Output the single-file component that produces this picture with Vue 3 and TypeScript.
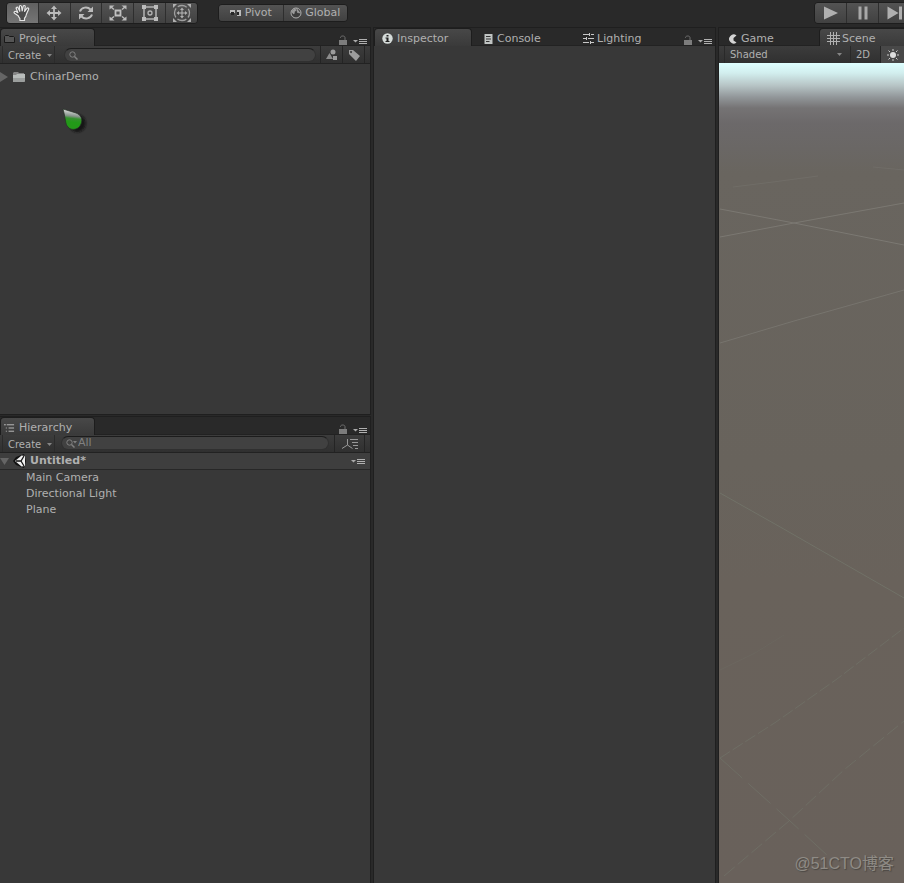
<script setup lang="ts">
import { ref } from 'vue'

interface Tool {
  id: string
  label: string
}

const tools: Tool[] = [
  { id: 'hand', label: 'Hand' },
  { id: 'move', label: 'Move' },
  { id: 'rotate', label: 'Rotate' },
  { id: 'scale', label: 'Scale' },
  { id: 'rect', label: 'Rect' },
  { id: 'transform', label: 'Transform' },
]
const playback: Tool[] = [
  { id: 'play', label: 'Play' },
  { id: 'pause', label: 'Pause' },
  { id: 'step', label: 'Step' },
]
const activeTool = ref<string>('hand')
const objects: string[] = ['Main Camera', 'Directional Light', 'Plane']
const projectQuery = ref('')
const hierarchyQuery = ref('')
const shading = ref('Shaded')
</script>

<template>
  <div class="editor">
    <svg class="sprite" aria-hidden="true">
      <symbol id="hand" viewBox="0 0 18 18">
        <path d="M5.2 11.800 1.500 9.200C.5 8.300 1.600 6.800 2.900 7.600l2 1.200L3.200 4.600c-.4-1.300 1.300-1.900 1.900-.7L6.800 7.300 6.400 2.600c0-1.400 1.900-1.500 2.100-.1L9.200 6.800l1-4.500c.4-1.300 2.200-.9 2 .5l-.6 4.700 2.200-3.100c.8-1 2.300-.1 1.700 1.100l-2 4.500c-.3 2-.8 3.200-2 4.300v2.200H6.900v-2c-1-.8-1.300-1.700-1.700-2.700z" fill="#4b4b4b" stroke="#e4e4e4" stroke-width="1.200" stroke-linejoin="round" />
      </symbol>
      <symbol id="move" viewBox="0 0 18 18">
        <path d="M9 3v12M3 9h12" stroke="#bcbcbc" stroke-width="1.800" />
        <path d="M9 1.500 12 5H6zM9 16.500 6 13h6zM1.500 9 5 6v6zM16.500 9 13 12V6z" fill="#bcbcbc" />
      </symbol>
      <symbol id="rotate" viewBox="0 0 18 18">
        <path d="M3 7.500C4.500 3 10.500 2.300 13.500 5.500M15 10.500C13.500 15 7.500 15.700 4.500 12.500" fill="none" stroke="#bcbcbc" stroke-width="2" />
        <path d="M16 2.500v5.500h-5.500zM2 15.500V10h5.500z" fill="#bcbcbc" />
      </symbol>
      <symbol id="scale" viewBox="0 0 18 18">
        <path d="M6.500 6.500h5v5h-5z" fill="#505050" stroke="#c0c0c0" stroke-width="1.800" />
        <path d="m2 3 3 2.500M16 3l-3 2.500M2 15l3-2.500M16 15l-3-2.500" stroke="#bcbcbc" stroke-width="1.500" />
        <path d="M.5 1.500h5l-5 4zM17.500 1.500h-5l5 4zM.5 16.500h5l-5-4zM17.500 16.500h-5l5-4z" fill="#bcbcbc" />
      </symbol>
      <symbol id="rect" viewBox="0 0 18 18">
        <path d="M3 3h12v12H3z" fill="none" stroke="#b4b4b4" stroke-width="1.500" />
        <path d="M1 1h4v4H1zM13 1h4v4h-4zM1 13h4v4H1zM13 13h4v4h-4z" fill="#bcbcbc" />
        <circle cx="9" cy="9" r="2" fill="none" stroke="#b4b4b4" stroke-width="1.300" />
      </symbol>
      <symbol id="transform" viewBox="0 0 20 20">
        <circle cx="10" cy="10" r="7.500" fill="none" stroke="#a0a0a0" stroke-width="1.300" stroke-dasharray="9.500 2.280" stroke-dashoffset="4.700" />
        <path d="M10 6v8M6 10h8" stroke="#b8b8b8" />
        <path d="m10 4.500 2 2.500H8zM10 15.500 8 13h4zM4.500 10 7 8v4zM15.500 10 13 12V8zM1 1h4L1 5zM19 1h-4l4 4zM1 19h4l-4-4zM19 19h-4l4-4z" fill="#b0b0b0" />
      </symbol>
      <symbol id="play" viewBox="0 0 18 18"><path d="M2 2.500 16 9 2 15.500z" fill="#b0b0b0" /></symbol>
      <symbol id="pause" viewBox="0 0 18 18"><path d="M4.500 2.500h3v13h-3zM10.500 2.500h3v13h-3z" fill="#a8a8a8" /></symbol>
      <symbol id="step" viewBox="0 0 18 18"><path d="m1.500 2.500 11 6.500-11 6.500zM13 2.500h3v13h-3z" fill="#b0b0b0" /></symbol>
      <symbol id="lock" viewBox="0 0 8 10">
        <path d="M1.500 3V2.500c0-2 4.500-2 4.500 0V5" fill="none" stroke="#707070" />
        <path d="M0 5h8v5H0z" fill="#7c7c7c" />
      </symbol>
      <symbol id="menu" viewBox="0 0 14 7">
        <path d="M0 2h5L2.500 4.500z" fill="#aaa" />
        <path d="M6 1.500h8M6 3.500h8M6 5.500h8" stroke="#b0b0b0" />
      </symbol>
      <symbol id="caret" viewBox="0 0 5 3"><path d="M0 0h5L2.500 3z" fill="#858585" /></symbol>
      <symbol id="search" viewBox="0 0 9 9">
        <circle cx="3.500" cy="3.500" r="2.700" fill="none" stroke="#808080" />
        <path d="m5.500 5.500 3 3" stroke="#808080" stroke-width="1.500" />
      </symbol>
    </svg>

    <header class="toolbar">
      <div class="group tools">
        <button
          v-for="tool in tools"
          :key="tool.id"
          type="button"
          :aria-label="tool.label"
          :class="{ on: tool.id === activeTool }"
          @click="activeTool = tool.id"
        >
          <svg :class="{ wide: tool.id === 'transform' }"><use :href="'#' + tool.id" /></svg>
        </button>
      </div>
      <div class="group handles">
        <button type="button">
          <svg class="handle-icon" viewBox="0 0 12 12">
            <path d="M0 3h5v3H0zM7 3h4v6H7z" fill="#bcbcbc" />
            <path d="M1 5h3v3H1zM7 5h2v3H7z" fill="#262626" />
          </svg>
          Pivot
        </button>
        <button type="button">
          <svg class="handle-icon" viewBox="0 0 12 12">
            <circle cx="6" cy="6" r="5" fill="#3c3c3c" stroke="#b0b0b0" />
            <path d="m2 4 3-2.500 1 2-1.500 1L4 7 2.500 6zM6.500 1l1 4.500 3 .5" fill="#999" stroke="#aaa" stroke-width="0.600" />
          </svg>
          Global
        </button>
      </div>
      <div class="group playback">
        <button v-for="item in playback" :key="item.id" type="button" :aria-label="item.label">
          <svg><use :href="'#' + item.id" /></svg>
        </button>
      </div>
    </header>

    <main class="workspace">
      <div class="column left">
        <section class="panel">
          <div class="tabs">
            <button class="tab active short" type="button">
              <svg class="folder" viewBox="0 0 11 8"><path d="M.5 7.500v-6l1-1h3l1 1h4l1 1v5z" fill="#555" stroke="#181818" /></svg>
              Project
            </button>
            <span class="tab-actions">
              <button type="button" aria-label="Lock Project"><svg class="lock"><use href="#lock" /></svg></button>
              <button type="button" aria-label="Project menu"><svg class="menu"><use href="#menu" /></svg></button>
            </span>
          </div>
          <div class="bar">
            <button class="create" type="button">Create <svg class="caret"><use href="#caret" /></svg></button>
            <label class="search">
              <svg><use href="#search" /></svg>
              <input v-model="projectQuery" type="text" aria-label="Search project" />
            </label>
            <button class="filter" type="button" aria-label="Search by type">
              <svg viewBox="0 0 12 12"><path d="m3.500 4 3.500 6H0z" fill="#8c8c8c" /><circle cx="7" cy="3" r="2.500" fill="#9c9c9c" /><path d="M7 7h4v4H7z" fill="#9c9c9c" /></svg>
            </button>
            <button class="filter" type="button" aria-label="Search by label">
              <svg viewBox="0 0 12 12"><path d="M1 1h4l7 6-4 5-7-7zM3 2a1 1 0 1 0 .1 0z" fill="#9c9c9c" fill-rule="evenodd" /></svg>
            </button>
            <span class="bar-end"></span>
          </div>
          <div class="content">
            <div class="folder-row">
              <svg class="fold" viewBox="0 0 8 10"><path d="m0 0 8 5-8 5z" fill="#656565" /></svg>
              <svg class="folder-open" viewBox="0 0 14 12">
                <path d="M1 10V2l1-1h4l1 1h5v8z" fill="#858585" />
                <path d="M1 4h3l1-1h8v7l-1 1H1z" fill="#b8bcba" />
                <path d="M1 7h12v3l-1 1H1z" fill="#9b9e9d" />
              </svg>
              ChinarDemo
            </div>
            <svg class="pointer" viewBox="0 0 26 27">
              <defs>
                <linearGradient id="drop" x1="0.100" y1="0" x2="0" y2="1">
                  <stop offset="0" stop-color="#e4e4e4" />
                  <stop offset="0.300" stop-color="#86938a" />
                  <stop offset="0.420" stop-color="#35912e" />
                  <stop offset="0.600" stop-color="#229a18" />
                  <stop offset="1" stop-color="#249818" />
                </linearGradient>
                <filter id="soft"><feGaussianBlur stdDeviation="1.200" /></filter>
              </defs>
              <path d="M4 4 18 7c5 2 7 7 5 12-2 5-9 7-13 3-3-3-3-8-6-18z" fill="#161616" filter="url(#soft)" />
              <path d="M1 1 14 5c5 2 7 6 5 11-2 6-10 7-13 3C3 16 4 12 1 1z" fill="url(#drop)" stroke="#243024" stroke-width="0.700" />
            </svg>
          </div>
        </section>

        <section class="panel">
          <div class="tabs">
            <button class="tab active short" type="button">
              <svg class="tree" viewBox="0 0 12 10"><path d="M0 1.500h2M3 1.500h8M2 5h1M5 5h6M2 8.500h1M5 8.500h6" stroke="#c4c4c4" /></svg>
              Hierarchy
            </button>
            <span class="tab-actions">
              <button type="button" aria-label="Lock Hierarchy"><svg class="lock"><use href="#lock" /></svg></button>
              <button type="button" aria-label="Hierarchy menu"><svg class="menu"><use href="#menu" /></svg></button>
            </span>
          </div>
          <div class="bar">
            <button class="create" type="button">Create <svg class="caret"><use href="#caret" /></svg></button>
            <label class="search scoped">
              <svg class="scope" viewBox="0 0 12 9">
                <circle cx="3.500" cy="3.500" r="2.700" fill="none" stroke="#808080" />
                <path d="m5.500 5.500 3 3" stroke="#808080" stroke-width="1.500" />
                <path d="M7 2h4L9 4.500z" fill="#808080" />
              </svg>
              <input v-model="hierarchyQuery" type="text" placeholder="All" aria-label="Search hierarchy" />
            </label>
            <button class="filter sort" type="button" aria-label="Sort objects">
              <svg viewBox="0 0 16 12"><path d="M5.500 1v6L0 10.500M5.500 7l5 3.500M8 1.500h8M10 4.500h6M11 7.500h5M13 10.500h3" fill="none" stroke="#989898" /></svg>
            </button>
            <span class="bar-end"></span>
          </div>
          <div class="scene-row">
            <svg class="fold-open" viewBox="0 0 9 7"><path d="M0 0h9L4.500 7z" fill="#656565" /></svg>
            <svg class="unity" viewBox="0 0 14 14">
              <path d="M0 7 3 3l8-3 2 7-2 7-8-3z" fill="#111" />
              <path d="M2 7 8.500 1.500 12 2v10l-3.500.5z" fill="#f0f0f0" />
              <path d="M3 7h5l3-5M8 7l3 5" fill="none" stroke="#151515" stroke-width="1.300" />
            </svg>
            <strong>Untitled*</strong>
            <button class="row-menu" type="button" aria-label="Scene menu"><svg class="menu"><use href="#menu" /></svg></button>
          </div>
          <ul class="objects">
            <li v-for="name in objects" :key="name">{{ name }}</li>
          </ul>
        </section>
      </div>

      <section class="panel">
        <div class="tabs">
          <button class="tab active" type="button">
            <svg class="info" viewBox="0 0 11 11">
              <circle cx="5.500" cy="5.500" r="5.200" fill="#d5dbd9" />
              <path d="M4.500 2h2v1.500h-2zM3.500 4.500h3V8h1v1h-4V8h1V5.500h-1z" fill="#222" />
            </svg>
            Inspector
          </button>
          <button class="tab" type="button">
            <svg class="console" viewBox="0 0 9 10"><path d="M0 0h8v10H0z" fill="#c0c4c3" /><path d="M1.500 2.500H6M1.500 5h5M1.500 7.500H5" stroke="#333" /></svg>
            Console
          </button>
          <button class="tab" type="button">
            <svg class="sliders" viewBox="0 0 11 11"><path d="M0 1.500h6M8 1.500h3M0 5.500h3M5 5.500h6M0 9.500h6M8 9.500h3M6.500 0v3M3.500 4v3M7.500 8v3" fill="none" stroke="#c8c8c8" /></svg>
            Lighting
          </button>
          <span class="tab-actions">
            <button type="button" aria-label="Lock Inspector"><svg class="lock"><use href="#lock" /></svg></button>
            <button type="button" aria-label="Inspector menu"><svg class="menu"><use href="#menu" /></svg></button>
          </span>
        </div>
        <div class="content"></div>
      </section>

      <section class="panel scene">
        <div class="tabs">
          <button class="tab game" type="button">
            <svg class="console" viewBox="0 0 10 10"><path d="M8.500 1.500A4.500 4.500 0 1 0 8.500 8.500L5.500 6.500V4z" fill="#d4d4d4" /></svg>
            Game
          </button>
          <button class="tab active view" type="button">
            <svg class="grid-icon" viewBox="0 0 13 13"><path d="M0 3.500h13M0 6.500h13M0 9.500h13M3.500 0v13M6.500 0v13M9.500 0v13" stroke="#b0b0b0" /></svg>
            Scene
          </button>
        </div>
        <div class="bar">
          <span class="shading">
            <select v-model="shading" aria-label="Draw mode"><option>Shaded</option></select>
            <svg class="caret"><use href="#caret" /></svg>
          </span>
          <button class="two-d" type="button">2D</button>
          <button class="light" type="button" aria-label="Scene lighting">
            <svg viewBox="0 0 12 12"><circle cx="6" cy="6" r="3" fill="#ddd" /><path d="M6 0v2M6 10v2M0 6h2M10 6h2M1.500 1.500 3 3M9 9l1.500 1.500M10.500 1.500 9 3M3 9l-1.500 1.500" stroke="#ccc" /></svg>
          </button>
        </div>
        <div class="viewport">
          <svg class="ground" viewBox="0 0 185 820" preserveAspectRatio="xMinYMin slice">
            <g fill="none" stroke="#7b7872" stroke-width="1">
              <path d="m1 146 74 14 110 22" />
              <path d="M1 174 75 160l110-20" />
              <path d="M1 280 75 258l110-31" opacity="0.800" />
              <path d="m14 124 40-5 45-6M154 104l31 3" opacity="0.400" />
              <path d="m1 430 62 35 122 70" stroke="#777b70" opacity="0.600" />
              <path d="m1 695 56-36 61-43 67-51" stroke="#737a6d" stroke-dasharray="12 3" opacity="0.500" />
              <path d="m5 813 65-55 56-52 59-48" stroke="#737a6d" stroke-dasharray="14 4" opacity="0.500" />
              <path d="m1 695 70 63 38 35" stroke="#737a6d" stroke-dasharray="30 8" opacity="0.500" />
              <path d="m1 607 35-17 29-18" stroke="#737a6d" opacity="0.200" />
            </g>
          </svg>
          <span class="watermark">@51CTO博客</span>
        </div>
      </section>
    </main>
  </div>
</template>

<style>
body {
  margin: 0;
  background: #292929;
}
</style>

<style scoped>
.editor {
  display: flex;
  flex-direction: column;
  min-height: 100vh;
  overflow: hidden;
  background: #292929;
  color: #b0b0b0;
  font: 11px/16px "DejaVu Sans", Verdana, sans-serif;
}
.editor * { box-sizing: border-box; }
.sprite { position: absolute; width: 0; height: 0; }
button {
  display: flex;
  align-items: center;
  margin: 0;
  padding: 0;
  border: 0;
  background: none;
  color: inherit;
  font: inherit;
  white-space: nowrap;
}
svg { flex: none; display: block; }

.toolbar {
  display: flex;
  align-items: center;
  height: 28px;
  padding: 0 0 2px 6px;
}
.group {
  display: flex;
  flex: none;
  height: 22px;
  overflow: hidden;
  border: 1px solid #1d1d1d;
  border-radius: 4px;
}
.group button {
  flex: 1;
  justify-content: center;
  background: linear-gradient(#535353, #414141);
}
.group button + button { border-left: 1px solid #2e2e2e; }
.group button.on { background: linear-gradient(#606060, #757575); }
.group svg { width: 18px; height: 18px; }
.group svg.wide { width: 20px; height: 20px; }
.tools { width: 192px; }
.handles { width: 130px; height: 18px; margin-left: 20px; }
.handles button { gap: 3px; }
.group .handle-icon { width: 12px; height: 12px; }
.playback { width: 97px; margin-left: auto; margin-right: -7px; }

.workspace {
  flex: 1;
  display: grid;
  grid-template-columns: minmax(0, 370fr) minmax(0, 341fr) minmax(0, 185fr);
  column-gap: 4px;
}
.left {
  display: grid;
  grid-template-rows: 386fr 466fr;
  row-gap: 3px;
}
.panel {
  display: flex;
  flex-direction: column;
  min-width: 0;
  background: #383838;
  box-shadow: 0 0 0 1px #1f1f1f;
}
.tabs {
  display: flex;
  height: 18px;
  background: #292929;
  border-bottom: 1px solid #222;
}
.tab {
  flex: none;
  width: 95px;
  height: 18px;
  margin-left: 4px;
  padding: 3px 0 0 8px;
  gap: 3px;
}
.tab.active {
  width: 98px;
  margin-left: 0;
  padding: 2px 0 0 7px;
  gap: 4px;
  border: 1px solid #1d1d1d;
  border-bottom: 0;
  border-radius: 4px 4px 0 0;
  background: linear-gradient(#484848, #3a3a3a);
}
.tab.active.short { width: 95px; padding-left: 3px; }
.tab.active.view { gap: 2px; }
.tab.game { width: 100px; margin-left: 0; padding-left: 9px; }
.tab-actions {
  display: flex;
  align-items: flex-end;
  gap: 6px;
  margin-left: auto;
  padding-right: 3px;
}
.lock { width: 8px; height: 10px; }
.menu { width: 14px; height: 7px; }
.folder { width: 11px; height: 8px; }
.tree { width: 11px; height: 10px; }
.info, .sliders { width: 11px; height: 11px; }
.console { width: 10px; height: 10px; }
.grid-icon { width: 13px; height: 13px; }

.bar {
  display: flex;
  align-items: stretch;
  height: 18px;
  border-bottom: 1px solid #222;
  background: linear-gradient(#3c3c3c, #303030);
  font-size: 10px;
}
.create {
  width: 53px;
  margin-left: 2px;
  padding: 2px 0 0 5px;
  gap: 6px;
  border: 1px solid #2b2b2b;
  border-width: 0 1px;
}
.caret { width: 5px; height: 3px; }
.search {
  flex: 1;
  display: flex;
  align-items: center;
  min-width: 0;
  height: 14px;
  margin: 2px 4px 0 9px;
  padding-left: 4px;
  gap: 3px;
  border: 1px solid #303030;
  border-top-color: #1c1c1c;
  border-radius: 7px;
  background: #414141;
}
.search.scoped { margin: 1px 5px 0 6px; gap: 0; }
.search svg { width: 9px; height: 9px; }
.search .scope { width: 12px; }
.search input {
  flex: 1;
  min-width: 0;
  height: 12px;
  padding: 0;
  border: 0;
  outline: 0;
  background: none;
  color: #b0b0b0;
  font: 11px/12px "DejaVu Sans", Verdana, sans-serif;
}
.search input::placeholder { color: #808080; opacity: 1; }
.filter {
  width: 22px;
  justify-content: center;
  border-left: 1px solid #242424;
}
.filter svg { width: 12px; height: 12px; }
.filter.sort { width: 30px; }
.filter.sort svg { width: 16px; }
.bar-end { width: 6px; border-left: 1px solid #242424; }

.content { flex: 1; position: relative; }
.folder-row {
  display: flex;
  align-items: center;
  padding-top: 5px;
}
.fold { width: 8px; height: 10px; margin-right: 4px; }
.folder-open { width: 14px; height: 12px; margin-right: 4px; }
.pointer {
  position: absolute;
  top: 44px;
  left: 62px;
  width: 26px;
  height: 27px;
}
.scene-row {
  display: flex;
  align-items: center;
  height: 17px;
  border-bottom: 1px solid #272727;
  background: #3e3e3e;
}
.fold-open { width: 9px; height: 7px; margin-right: 4px; }
.unity { width: 14px; height: 14px; margin-right: 3px; }
.row-menu { margin-left: auto; margin-right: 5px; }
.objects {
  margin: 0;
  padding: 0 0 0 26px;
  list-style: none;
}

.shading {
  flex: 1;
  position: relative;
  display: flex;
  align-items: center;
  margin-left: 5px;
  padding-right: 8px;
  border: 1px solid #292929;
  border-width: 0 1px;
}
.shading select {
  flex: 1;
  min-width: 0;
  height: 16px;
  padding: 0 0 0 5px;
  border: 0;
  appearance: none;
  background: none;
  color: #b0b0b0;
  font: 10px/16px "DejaVu Sans", Verdana, sans-serif;
}
.two-d { width: 30px; justify-content: center; border-right: 1px solid #252525; padding-right: 5px; }
.light { width: 23px; justify-content: center; background: #484848; }
.light svg { width: 12px; height: 12px; }
.scene .bar { height: 17px; border-bottom: 0; }
.viewport {
  flex: 1;
  position: relative;
  background: linear-gradient(#deffff 0, #d2eeee 10px, #b8c6c7 22px, #92979a 34px, #757374 45px, #6c696a 60px, #6a6765 85px, #69655f 110px, #68635c 400px, #69625b 520px, #69615b 100%);
}
.ground { position: absolute; inset: 0; width: 100%; height: 100%; }
.watermark {
  position: absolute;
  right: 10px;
  bottom: 9px;
  color: #8f8b85;
  font: 16px/20px "Liberation Sans", "Noto Sans CJK SC", sans-serif;
  text-shadow: 1px 1px 1px #4b4844;
}
</style>
